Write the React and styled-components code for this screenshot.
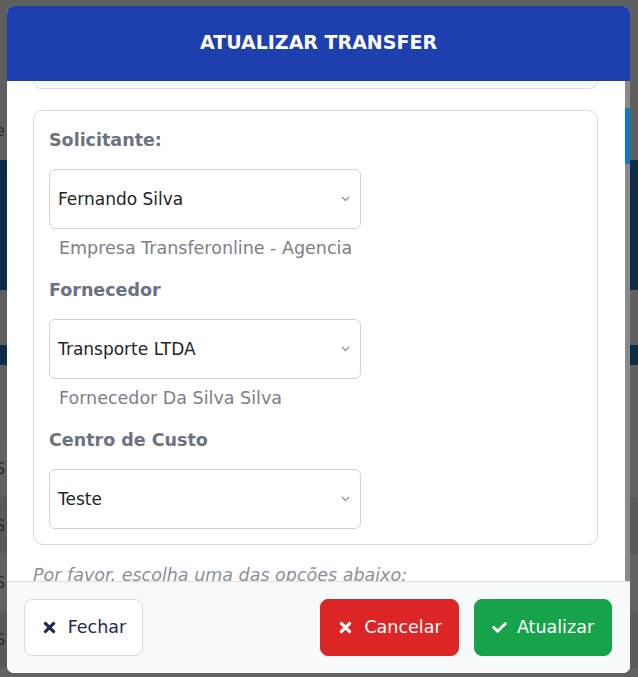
import styled, { createGlobalStyle } from "styled-components";
import { FaTimes, FaCheck } from "react-icons/fa";

const GlobalStyle = createGlobalStyle`
  html, body {
    margin: 0;
    padding: 0;
    width: 100%;
    height: 100%;
    overflow: hidden;
  }
  body {
    font-family: "DejaVu Sans", "Liberation Sans", sans-serif;
    background: #5f5f5f;
  }
  * {
    box-sizing: border-box;
  }
`;

const fields = [
  {
    label: "Solicitante:",
    value: "Fernando Silva",
    helper: "Empresa Transferonline - Agencia",
  },
  {
    label: "Fornecedor",
    value: "Transporte LTDA",
    helper: "Fornecedor Da Silva Silva",
  },
  {
    label: "Centro de Custo",
    value: "Teste",
  },
];

const pageRows = [0, 1, 2, 3, 4];

const App = () => {
  return (
    <Screen>
      <GlobalStyle />
      <Page>
        <PageBand $height={100} />
        <PageBand $height={60}>
          <PageGlyph>e</PageGlyph>
        </PageBand>
        <PageBand $height={130} $navy />
        <PageBand $height={55} />
        <PageBand $height={20} $navy />
        <PageBand $height={75} />
        {pageRows.map((row) => (
          <PageRow key={row} $alt={row % 2 === 1}>
            <PageGlyph>S</PageGlyph>
          </PageRow>
        ))}
      </Page>

      <Modal>
        <Header>
          <Title>ATUALIZAR TRANSFER</Title>
        </Header>

        <Body>
          <Content>
            <CardTail />
            <Card>
              {fields.map((field) => (
                <Field key={field.label}>
                  <Label>{field.label}</Label>
                  <SelectBox>
                    <SelectValue>{field.value}</SelectValue>
                    <svg width="9" height="6" viewBox="0 0 9 6">
                      <path
                        d="M1 1l3.5 3.5L8 1"
                        fill="none"
                        stroke="#8a8f96"
                        strokeWidth="1.2"
                      />
                    </svg>
                  </SelectBox>
                  {field.helper && <Helper>{field.helper}</Helper>}
                </Field>
              ))}
            </Card>
            <Hint>Por favor, escolha uma das opções abaixo:</Hint>
          </Content>
          <Scrollbar>
            <Thumb />
          </Scrollbar>
        </Body>

        <Footer>
          <Button $variant="light" $width={119}>
            <FaTimes size={17} />
            Fechar
          </Button>
          <Actions>
            <Button $variant="danger" $width={139}>
              <FaTimes size={17} />
              Cancelar
            </Button>
            <Button $variant="success" $width={138}>
              <FaCheck size={15} />
              Atualizar
            </Button>
          </Actions>
        </Footer>
      </Modal>
    </Screen>
  );
};

// Styled Components
const Screen = styled.div`
  position: relative;
  width: 638px;
  height: 677px;
  overflow: hidden;
  background: #5f5f5f;
`;

const Page = styled.div`
  display: flex;
  flex-direction: column;
`;

const PageBand = styled.div`
  height: ${(props) => props.$height}px;
  background: ${(props) => (props.$navy ? "#0c2c48" : "#5f5f5f")};
  display: flex;
  align-items: center;
`;

const PageRow = styled.div`
  height: 57px;
  background: ${(props) => (props.$alt ? "#5a5a5a" : "#626262")};
  display: flex;
  align-items: center;
`;

const PageGlyph = styled.span`
  margin-left: -5px;
  font-size: 16px;
  color: #2a2a2a;
`;

const Modal = styled.div`
  position: absolute;
  top: 6px;
  left: 7px;
  width: 623px;
  height: 667px;
  display: flex;
  flex-direction: column;
  background: #ffffff;
  border-radius: 7px;
  overflow: hidden;
`;

const Header = styled.div`
  height: 75px;
  flex-shrink: 0;
  display: flex;
  align-items: center;
  justify-content: center;
  padding-bottom: 3px;
  background: #1e3fae;
`;

const Title = styled.h2`
  margin: 0;
  font-size: 19px;
  font-weight: 700;
  color: #ffffff;
`;

const Body = styled.div`
  flex: 1;
  min-height: 0;
  display: flex;
  overflow: hidden;
`;

const Content = styled.div`
  flex: 1;
  padding: 0 27px 0 26px;
`;

const CardTail = styled.div`
  height: 8px;
  background: #f8f9fb;
  border: 1px solid #dcdfe3;
  border-top: none;
  border-radius: 0 0 10px 10px;
`;

const Card = styled.div`
  margin-top: 21px;
  padding: 15px;
  border: 1px solid #d6d8db;
  border-radius: 10px;
  display: flex;
  flex-direction: column;
  gap: 15px;
`;

const Field = styled.div`
  display: flex;
  flex-direction: column;
`;

const Label = styled.div`
  height: 28px;
  line-height: 28px;
  margin-bottom: 15px;
  font-size: 17.5px;
  font-weight: 700;
  color: #6b7280;
`;

const SelectBox = styled.div`
  width: 312px;
  height: 60px;
  padding: 0 10px 0 8px;
  display: flex;
  align-items: center;
  justify-content: space-between;
  border: 1px solid #cfd2d6;
  border-radius: 6px;
  background: #ffffff;
`;

const SelectValue = styled.span`
  font-size: 17px;
  color: #222529;
`;

const Helper = styled.div`
  margin-top: 6px;
  padding-left: 10px;
  height: 26px;
  line-height: 26px;
  font-size: 17.5px;
  color: #7b8088;
`;

const Hint = styled.p`
  margin: 20px 0 0;
  font-size: 17.5px;
  font-style: italic;
  color: #8a8f97;
`;

const Scrollbar = styled.div`
  width: 5px;
  flex-shrink: 0;
  padding-top: 27px;
  background: #8a8a8a;
`;

const Thumb = styled.div`
  height: 56px;
  background: #0e79c4;
`;

const Footer = styled.div`
  height: 92px;
  flex-shrink: 0;
  display: flex;
  align-items: flex-start;
  justify-content: space-between;
  padding: 17px 18px 0 17px;
  background: #f8f9fb;
  border-top: 1px solid #dcdfe3;
`;

const Actions = styled.div`
  display: flex;
  gap: 15px;
`;

const variants = {
  light: { bg: "#ffffff", color: "#1f2a4d", border: "#d6d8db" },
  danger: { bg: "#dc2626", color: "#ffffff", border: "#dc2626" },
  success: { bg: "#16a34a", color: "#ffffff", border: "#16a34a" },
};

const Button = styled.button`
  width: ${(props) => props.$width}px;
  height: 57px;
  display: flex;
  align-items: center;
  justify-content: center;
  gap: 10px;
  padding: 0 0 1px;
  font-family: inherit;
  font-size: 17.5px;
  color: ${(props) => variants[props.$variant].color};
  background: ${(props) => variants[props.$variant].bg};
  border: 1px solid ${(props) => variants[props.$variant].border};
  border-radius: 8px;
  cursor: pointer;
`;

export default App;
